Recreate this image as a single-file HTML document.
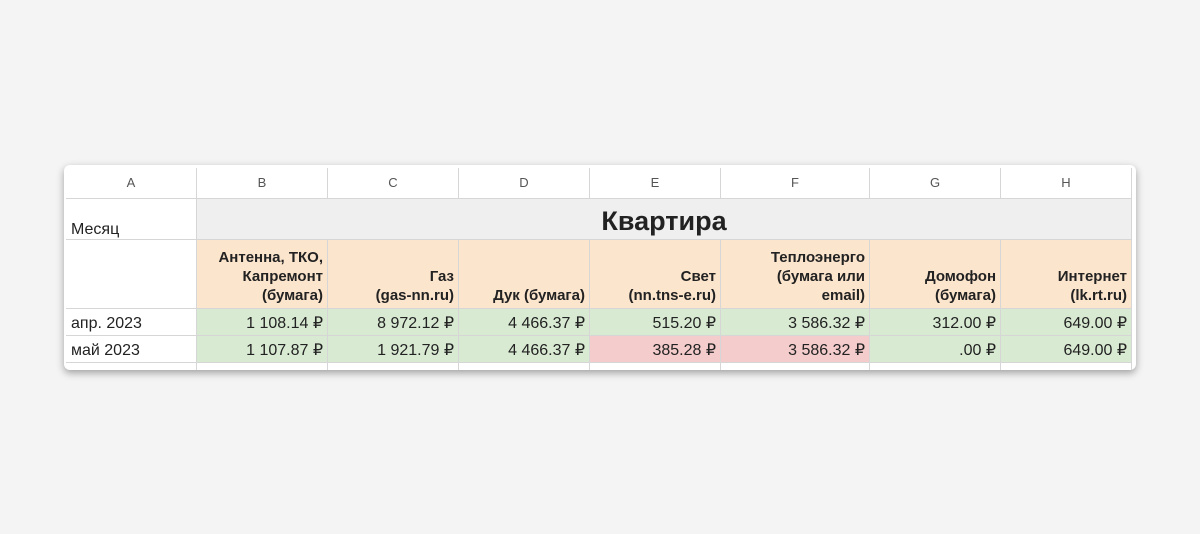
<!DOCTYPE html><html><head><style>
body{margin:0;width:1200px;height:534px;background:#f4f4f4;font-family:"Liberation Sans",Arial,sans-serif;position:relative;overflow:hidden}
.card{position:absolute;left:64px;top:165px;width:1072px;height:205px;background:#fff;border-radius:6px;box-shadow:0 3px 8px rgba(0,0,0,.35);overflow:hidden}
.c{position:absolute;box-sizing:border-box;border-right:1px solid #d6d6d6;border-bottom:1px solid #d6d6d6;font-size:16px;color:#222;white-space:nowrap}
.h{text-align:center;font-size:13px;color:#555;line-height:30px}
.r{text-align:right;padding-right:4px}
.b{font-weight:bold;font-size:15px;line-height:19px;text-align:right;padding-right:4px;display:flex;flex-direction:column;justify-content:flex-end;padding-bottom:3px;align-items:flex-end}
.g{background:#d9ead3}.p{background:#f4cccc}.o{background:#fce5cd}
.v{line-height:29px}
</style></head><body><div class="card">
<div class="c h" style="left:2px;top:3px;width:131px;height:31px">A</div>
<div class="c h" style="left:133px;top:3px;width:131px;height:31px">B</div>
<div class="c h" style="left:264px;top:3px;width:131px;height:31px">C</div>
<div class="c h" style="left:395px;top:3px;width:131px;height:31px">D</div>
<div class="c h" style="left:526px;top:3px;width:131px;height:31px">E</div>
<div class="c h" style="left:657px;top:3px;width:149px;height:31px">F</div>
<div class="c h" style="left:806px;top:3px;width:131px;height:31px">G</div>
<div class="c h" style="left:937px;top:3px;width:131px;height:31px">H</div>
<div class="c" style="left:2px;top:34px;width:131px;height:41px;padding:21px 0 0 5px;line-height:20px">Месяц</div>
<div class="c" style="left:133px;top:34px;width:935px;height:41px;background:#efefef;text-align:center;font-weight:bold;font-size:27px;line-height:44px">Квартира</div>
<div class="c" style="left:2px;top:75px;width:131px;height:69px"></div>
<div class="c b o" style="left:133px;top:75px;width:131px;height:69px"><span>Антенна, ТКО,</span><span>Капремонт</span><span>(бумага)</span></div>
<div class="c b o" style="left:264px;top:75px;width:131px;height:69px"><span>Газ</span><span>(gas-nn.ru)</span></div>
<div class="c b o" style="left:395px;top:75px;width:131px;height:69px"><span>Дук (бумага)</span></div>
<div class="c b o" style="left:526px;top:75px;width:131px;height:69px"><span>Свет</span><span>(nn.tns-e.ru)</span></div>
<div class="c b o" style="left:657px;top:75px;width:149px;height:69px"><span>Теплоэнерго</span><span>(бумага или</span><span>email)</span></div>
<div class="c b o" style="left:806px;top:75px;width:131px;height:69px"><span>Домофон</span><span>(бумага)</span></div>
<div class="c b o" style="left:937px;top:75px;width:131px;height:69px"><span>Интернет</span><span>(lk.rt.ru)</span></div>
<div class="c v" style="left:2px;top:144px;width:131px;height:27px;padding-left:5px">апр. 2023</div>
<div class="c v r g" style="left:133px;top:144px;width:131px;height:27px">1 108.14 ₽</div>
<div class="c v r g" style="left:264px;top:144px;width:131px;height:27px">8 972.12 ₽</div>
<div class="c v r g" style="left:395px;top:144px;width:131px;height:27px">4 466.37 ₽</div>
<div class="c v r g" style="left:526px;top:144px;width:131px;height:27px">515.20 ₽</div>
<div class="c v r g" style="left:657px;top:144px;width:149px;height:27px">3 586.32 ₽</div>
<div class="c v r g" style="left:806px;top:144px;width:131px;height:27px">312.00 ₽</div>
<div class="c v r g" style="left:937px;top:144px;width:131px;height:27px">649.00 ₽</div>
<div class="c v" style="left:2px;top:171px;width:131px;height:27px;padding-left:5px">май 2023</div>
<div class="c v r g" style="left:133px;top:171px;width:131px;height:27px">1 107.87 ₽</div>
<div class="c v r g" style="left:264px;top:171px;width:131px;height:27px">1 921.79 ₽</div>
<div class="c v r g" style="left:395px;top:171px;width:131px;height:27px">4 466.37 ₽</div>
<div class="c v r p" style="left:526px;top:171px;width:131px;height:27px">385.28 ₽</div>
<div class="c v r p" style="left:657px;top:171px;width:149px;height:27px">3 586.32 ₽</div>
<div class="c v r g" style="left:806px;top:171px;width:131px;height:27px">.00 ₽</div>
<div class="c v r g" style="left:937px;top:171px;width:131px;height:27px">649.00 ₽</div>
<div class="c" style="left:2px;top:198px;width:131px;height:10px"></div>
<div class="c" style="left:133px;top:198px;width:131px;height:10px"></div>
<div class="c" style="left:264px;top:198px;width:131px;height:10px"></div>
<div class="c" style="left:395px;top:198px;width:131px;height:10px"></div>
<div class="c" style="left:526px;top:198px;width:131px;height:10px"></div>
<div class="c" style="left:657px;top:198px;width:149px;height:10px"></div>
<div class="c" style="left:806px;top:198px;width:131px;height:10px"></div>
<div class="c" style="left:937px;top:198px;width:131px;height:10px"></div>
</div></body></html>
